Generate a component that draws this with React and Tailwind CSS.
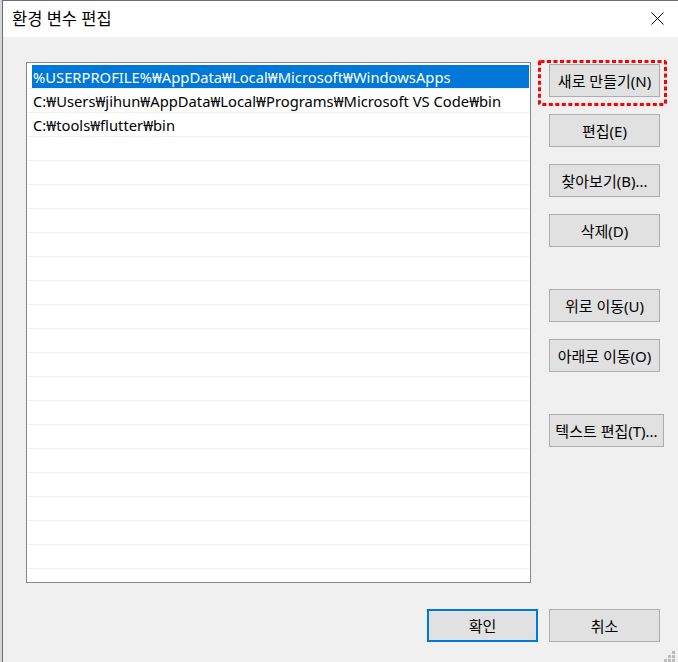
import React from 'react';

const paths = [
    '%USERPROFILE%₩AppData₩Local₩Microsoft₩WindowsApps',
    'C:₩Users₩jihun₩AppData₩Local₩Programs₩Microsoft VS Code₩bin',
    'C:₩tools₩flutter₩bin',
];

const font = { fontFamily: '"Noto Sans", "Noto Sans CJK KR", sans-serif' };

const WinButton = ({ children, className = '', focused = false }) => (
    <button
        className={`h-[33px] shrink-0 bg-[#e1e1e1] text-[15px] leading-none text-black whitespace-nowrap pt-[1px] ${focused ? 'border-2 border-[#0078d7]' : 'border border-[#adadad]'} ${className}`}
    >
        {children}
    </button>
);

const App = () => {
    const rows = [...paths, ...Array(18).fill('')];

    return (
        <div className="w-[678px] h-[662px] flex overflow-hidden" style={font}>
            {/* window behind */}
            <div className="w-[2px] shrink-0 bg-[#d6d6d6]" />

            {/* Dialog */}
            <div className="flex-1 flex flex-col border-l border-t border-[#6e6e6e] bg-[#f0f0f0] relative">
                {/* Title bar */}
                <div className="h-[36px] shrink-0 bg-white flex items-center justify-between pl-[9px] pr-[14px]">
                    <span className="text-[16.5px] text-black">환경 변수 편집</span>
                    <svg width="13" height="13" viewBox="0 0 13 13" className="mb-[1px]">
                        <path d="M0.5 0.5L12.5 12.5M12.5 0.5L0.5 12.5" stroke="#000" strokeWidth="1" fill="none" />
                    </svg>
                </div>

                {/* Body */}
                <div className="flex-1 flex flex-col pl-[23px] pr-[18px] pt-[25px]">
                    <div className="flex">
                        {/* List box */}
                        <div className="w-[505px] h-[521px] shrink-0 bg-white border border-[#828790] pt-[2px] pl-[1px] pr-[1px] overflow-hidden">
                            {rows.map((p, i) => (
                                <div key={i} className="h-[24px] border-b border-[#f0f0f0] flex">
                                    <div
                                        className={`ml-[4px] flex-1 flex items-center pl-[1px] pt-[1px] text-[14.75px] whitespace-nowrap overflow-hidden ${i === 0 ? 'bg-[#0078d7] text-white' : 'text-black'}`}
                                    >
                                        {p}
                                    </div>
                                </div>
                            ))}
                        </div>

                        {/* Side buttons */}
                        <div className="w-[111px] ml-[18px] pt-[2px] flex flex-col">
                            <div className="relative">
                                <WinButton className="w-[111px]">새로 만들기(N)</WinButton>
                                <svg className="absolute left-[-11px] top-[-4px]" width="129" height="46">
                                    <rect x="1.5" y="1.5" width="126" height="43" rx="1" fill="none" stroke="#ff0000" strokeWidth="3" strokeDasharray="4 2.5" />
                                </svg>
                            </div>
                            <WinButton className="w-[111px] mt-[17px]">편집(E)</WinButton>
                            <WinButton className="w-[111px] mt-[17px]">찾아보기(B)...</WinButton>
                            <WinButton className="w-[111px] mt-[17px]">삭제(D)</WinButton>
                            <WinButton className="w-[111px] mt-[42px]">위로 이동(U)</WinButton>
                            <WinButton className="w-[111px] mt-[17px]">아래로 이동(O)</WinButton>
                            <WinButton className="w-[115px] mt-[42px]">텍스트 편집(T)...</WinButton>
                        </div>
                    </div>

                    {/* Bottom buttons */}
                    <div className="flex justify-end gap-[11px] mt-[26px]">
                        <WinButton className="w-[111px]" focused>확인</WinButton>
                        <WinButton className="w-[111px]">취소</WinButton>
                    </div>
                </div>

                {/* Size grip */}
                <svg className="absolute right-[3px] bottom-0" width="11" height="11" viewBox="0 0 11 11">
                    <g fill="#bcbcbc">
                        <rect x="8" y="0" width="3" height="3" />
                        <rect x="4" y="4" width="3" height="3" />
                        <rect x="8" y="4" width="3" height="3" />
                        <rect x="0" y="8" width="3" height="3" />
                        <rect x="4" y="8" width="3" height="3" />
                        <rect x="8" y="8" width="3" height="3" />
                    </g>
                </svg>
            </div>
        </div>
    );
};

export default App;
